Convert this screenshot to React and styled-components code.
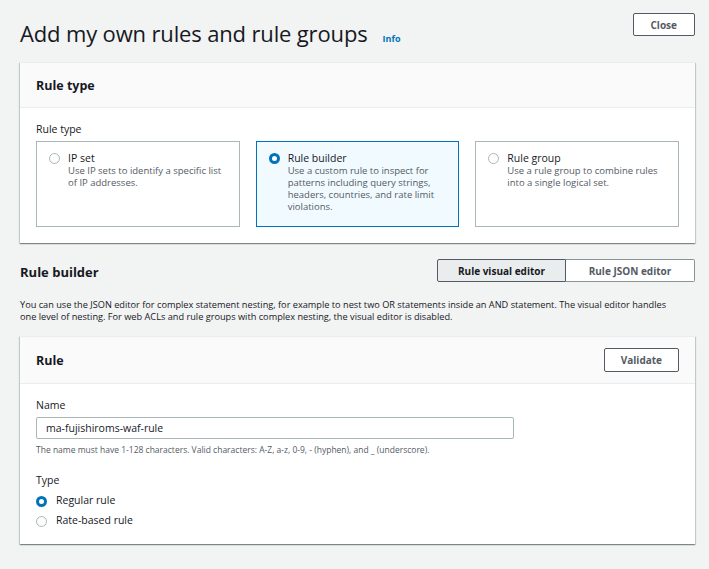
import React from "react";
import styled, { createGlobalStyle } from "styled-components";

const Global = createGlobalStyle`
  html, body { margin: 0; padding: 0; background: #f2f3f3; }
  body { font-family: "Open Sans", "Noto Sans", Arial, sans-serif; color: #16191f; }
  * { box-sizing: border-box; }
`;

const Page = styled.div`
  width: 709px;
  height: 569px;
  padding: 13px 14px 0 20px;
  background: #f2f3f3;
  overflow: hidden;
`;

const TopBar = styled.div`
  display: flex;
  justify-content: space-between;
  align-items: flex-start;
  height: 49px;
`;

const TitleWrap = styled.div`
  display: flex;
  align-items: baseline;
  gap: 15px;
  padding-top: 5px;
`;

const Title = styled.h1`
  margin: 0;
  font-size: 22px;
  font-weight: 400;
  line-height: 30px;
  letter-spacing: -0.15px;
  color: #16191f;
`;

const InfoLink = styled.a`
  font-size: 9px;
  font-weight: 700;
  color: #0073bb;
  text-decoration: none;
`;

const Button = styled.button`
  height: ${(p) => p.$h || 23}px;
  padding: 0 ${(p) => p.$px || 16}px;
  border: 1px solid #545b64;
  border-radius: 2px;
  background: #fff;
  color: #545b64;
  font-family: inherit;
  font-size: 10px;
  font-weight: 700;
  cursor: pointer;
`;

const Card = styled.section`
  background: #fff;
  box-shadow: 0 1px 1px 0 rgba(0, 28, 36, 0.3), 1px 1px 1px 0 rgba(0, 28, 36, 0.15),
    -1px 1px 1px 0 rgba(0, 28, 36, 0.15);
  border-top: 1px solid #eaeded;
`;

const CardHeader = styled.div`
  display: flex;
  justify-content: space-between;
  align-items: center;
  height: ${(p) => p.$h}px;
  padding: 0 16px;
  background: #fafafa;
  border-bottom: 1px solid #eaeded;
`;

const CardTitle = styled.h2`
  margin: 0;
  font-size: 12.5px;
  font-weight: 700;
  color: #16191f;
`;

const CardBody = styled.div`
  padding: ${(p) => p.$pad};
`;

const FieldLabel = styled.div`
  font-size: 10.5px;
  line-height: 14px;
  color: #16191f;
`;

const Tiles = styled.div`
  display: grid;
  grid-template-columns: 1fr 1fr 1fr;
  gap: 16px;
  margin-top: 5px;
`;

const Tile = styled.label`
  display: flex;
  gap: 8px;
  height: 86px;
  padding: 9px 12px;
  border: 1px solid ${(p) => (p.$selected ? "#0073bb" : "#aab7b8")};
  background: ${(p) => (p.$selected ? "#f1faff" : "#fff")};
`;

const Radio = styled.span`
  flex: none;
  width: 11px;
  height: 11px;
  border-radius: 50%;
  margin-top: ${(p) => p.$mt || 2}px;
  border: ${(p) => (p.$checked ? "3.5px solid #0073bb" : "1px solid #aab7b8")};
  background: #fff;
`;

const TileText = styled.div`
  display: flex;
  flex-direction: column;
`;

const TileTitle = styled.span`
  font-size: 10.5px;
  line-height: 14px;
  color: #16191f;
`;

const TileDesc = styled.span`
  font-size: 9.5px;
  line-height: 12px;
  color: #545b64;
`;

const SectionHead = styled.div`
  display: flex;
  justify-content: space-between;
  align-items: center;
  margin-top: 16px;
  height: 23px;
`;

const SectionTitle = styled.h2`
  margin: 0;
  padding-top: 3px;
  font-size: 13px;
  font-weight: 700;
  color: #16191f;
`;

const Segmented = styled.div`
  display: flex;
`;

const Segment = styled.button`
  height: 23px;
  width: ${(p) => p.$w}px;
  border: 1px solid ${(p) => (p.$active ? "#545b64" : "#879596")};
  ${(p) => (p.$active ? "" : "border-left: none;")}
  background: ${(p) => (p.$active ? "#eaeded" : "#fff")};
  color: ${(p) => (p.$active ? "#16191f" : "#545b64")};
  font-family: inherit;
  font-size: 10px;
  font-weight: 700;
  padding: 0;
  border-radius: ${(p) => (p.$first ? "2px 0 0 2px" : "0 2px 2px 0")};
`;

const Description = styled.p`
  margin: 17px 0 13px;
  max-width: 662px;
  font-size: 9.2px;
  line-height: 12px;
  color: #16191f;
`;

const Input = styled.input`
  display: block;
  width: 478px;
  height: 22px;
  margin-top: 5px;
  padding: 0 9px;
  border: 1px solid #aab7b8;
  border-radius: 2px;
  font-family: inherit;
  font-size: 10.5px;
  color: #16191f;
  background: #fff;
`;

const Help = styled.div`
  margin-top: 5px;
  font-size: 8.5px;
  line-height: 12px;
  color: #545b64;
`;

const TypeBlock = styled.div`
  margin-top: 17px;
`;

const RadioRow = styled.label`
  display: flex;
  align-items: center;
  gap: 9px;
  height: 20px;
  font-size: 10.5px;
  color: #16191f;
`;

const RadioList = styled.div`
  margin-top: 3px;
`;

export default function App() {
  return (
    <>
      <Global />
      <Page>
        <TopBar>
          <TitleWrap>
            <Title>Add my own rules and rule groups</Title>
            <InfoLink href="#">Info</InfoLink>
          </TitleWrap>
          <Button $px={17}>Close</Button>
        </TopBar>

        <Card>
          <CardHeader $h={45}>
            <CardTitle>Rule type</CardTitle>
          </CardHeader>
          <CardBody $pad="14px 16px 16px">
            <FieldLabel>Rule type</FieldLabel>
            <Tiles>
              <Tile>
                <Radio />
                <TileText>
                  <TileTitle>IP set</TileTitle>
                  <TileDesc>
                    Use IP sets to identify a specific list
                    <br />
                    of IP addresses.
                  </TileDesc>
                </TileText>
              </Tile>
              <Tile $selected>
                <Radio $checked />
                <TileText>
                  <TileTitle>Rule builder</TileTitle>
                  <TileDesc>
                    Use a custom rule to inspect for
                    <br />
                    patterns including query strings,
                    <br />
                    headers, countries, and rate limit
                    <br />
                    violations.
                  </TileDesc>
                </TileText>
              </Tile>
              <Tile>
                <Radio />
                <TileText>
                  <TileTitle>Rule group</TileTitle>
                  <TileDesc>
                    Use a rule group to combine rules
                    <br />
                    into a single logical set.
                  </TileDesc>
                </TileText>
              </Tile>
            </Tiles>
          </CardBody>
        </Card>

        <SectionHead>
          <SectionTitle>Rule builder</SectionTitle>
          <Segmented>
            <Segment $active $first $w={129}>
              Rule visual editor
            </Segment>
            <Segment $w={129}>Rule JSON editor</Segment>
          </Segmented>
        </SectionHead>

        <Description>
          You can use the JSON editor for complex statement nesting, for example to nest two OR
          statements inside an AND statement. The visual editor handles one level of nesting. For
          web ACLs and rule groups with complex nesting, the visual editor is disabled.
        </Description>

        <Card>
          <CardHeader $h={47}>
            <CardTitle>Rule</CardTitle>
            <Button $h={24} $px={16}>
              Validate
            </Button>
          </CardHeader>
          <CardBody $pad="14px 16px 14px">
            <FieldLabel>Name</FieldLabel>
            <Input defaultValue="ma-fujishiroms-waf-rule" />
            <Help>
              The name must have 1-128 characters. Valid characters: A-Z, a-z, 0-9, - (hyphen), and _
              (underscore).
            </Help>
            <TypeBlock>
              <FieldLabel>Type</FieldLabel>
              <RadioList>
                <RadioRow>
                  <Radio $checked $mt={0} />
                  Regular rule
                </RadioRow>
                <RadioRow>
                  <Radio $mt={0} />
                  Rate-based rule
                </RadioRow>
              </RadioList>
            </TypeBlock>
          </CardBody>
        </Card>
      </Page>
    </>
  );
}
